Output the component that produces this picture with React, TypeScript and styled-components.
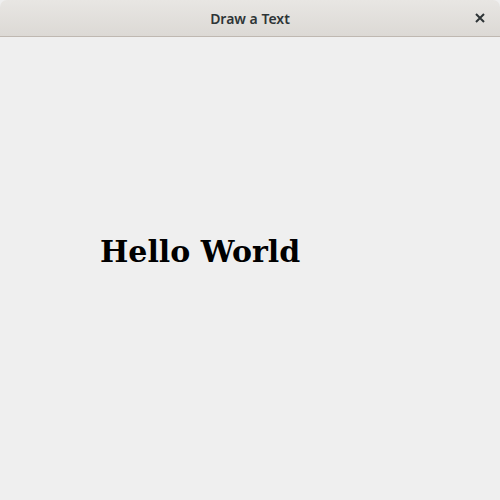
import React from 'react';
import styled, { createGlobalStyle } from 'styled-components';

const Global = createGlobalStyle`
  html, body {
    margin: 0;
    padding: 0;
    background: #efefef;
  }
`;

const Window = styled.div`
  width: 500px;
  height: 500px;
  display: flex;
  flex-direction: column;
  background: #efefef;
  overflow: hidden;
`;

const TitleBar = styled.div`
  height: 36px;
  flex-shrink: 0;
  display: flex;
  align-items: center;
  justify-content: center;
  position: relative;
  background: linear-gradient(#e8e6e3, #dcd9d5);
  border-bottom: 1px solid #bfb8b1;
  border-radius: 7px 7px 0 0;
  font-family: 'Noto Sans', 'Open Sans', sans-serif;
  font-weight: 600;
  font-size: 14px;
  color: #2e3436;
`;

const CloseButton = styled.div`
  position: absolute;
  right: 12px;
  top: 10px;
  width: 16px;
  height: 16px;
  display: flex;
  align-items: center;
  justify-content: center;
`;

const Canvas = styled.div`
  flex: 1;
  padding: 200px 0 0 100px;
`;

const Label = styled.div`
  font-family: 'DejaVu Serif', serif;
  font-weight: 700;
  font-size: 30px;
  line-height: 30px;
  color: #000;
`;

export default function App() {
  return (
    <>
      <Global />
      <Window>
        <TitleBar>
          Draw a Text
          <CloseButton>
            <svg width="10" height="10" viewBox="0 0 10 10">
              <path d="M1 1L9 9M9 1L1 9" stroke="#2e3436" strokeWidth="2" />
            </svg>
          </CloseButton>
        </TitleBar>
        <Canvas>
          <Label>Hello World</Label>
        </Canvas>
      </Window>
    </>
  );
}
